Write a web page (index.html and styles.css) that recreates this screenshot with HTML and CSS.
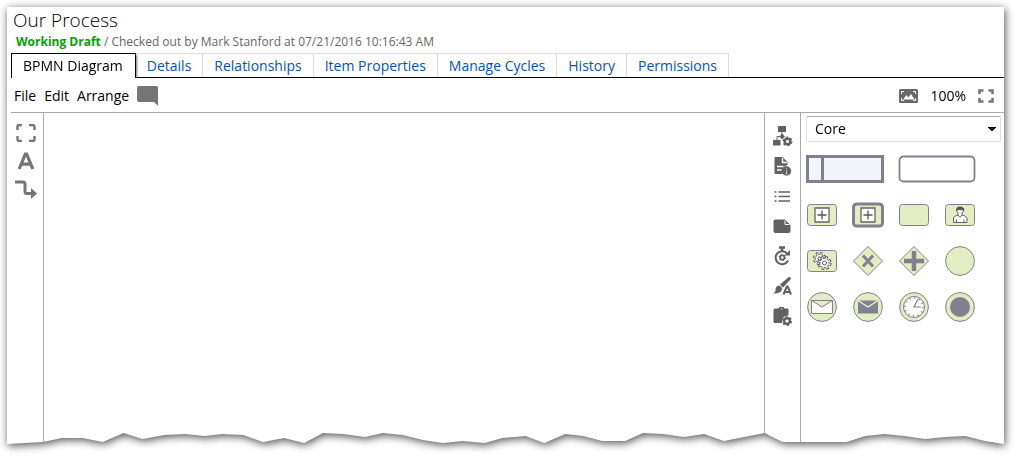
FILE: index.html
```html
<!DOCTYPE html>
<html lang="en">
<head>
<meta charset="utf-8">
<title>Our Process</title>
<link rel="stylesheet" href="styles.css">
</head>
<body>
<div class="shadow">
<div class="page">
  <header class="head">
    <h1 class="title">Our Process</h1>
    <p class="status"><strong class="state">Working Draft</strong> / Checked out by Mark Stanford at 07/21/2016 10:16:43 AM</p>
  </header>
  <nav class="tabs">
    <button class="tab active">BPMN Diagram</button>
    <button class="tab">Details</button>
    <button class="tab">Relationships</button>
    <button class="tab">Item Properties</button>
    <button class="tab">Manage Cycles</button>
    <button class="tab">History</button>
    <button class="tab">Permissions</button>
  </nav>
  <div class="toolbar">
    <button class="menu">File</button>
    <button class="menu">Edit</button>
    <button class="menu">Arrange</button>
    <button class="icon comment" aria-label="Comments"><svg width="22" height="20" viewBox="0 0 22 20"><path d="M2 0H19.500Q21 0 21 1.500V20L17 16H2Q0 16 0 14V2Q0 0 2 0Z" fill="#757575"/></svg></button>
    <span class="grow"></span>
    <button class="icon" aria-label="Overview"><svg width="19" height="14" viewBox="0 0 19 14"><rect width="19" height="14" rx="1.500" fill="#686868"/><path d="M2.500 5V2.500H5M14 2.500H16.500V5M16.500 9V11.500H14M5 11.500H2.500V9" fill="none" stroke="#fff"/><path d="M4 10.500L7.500 6L9.300 8.500L12 5L15.500 10.500Z" fill="#fff"/></svg></button>
    <span class="zoom">100%</span>
    <button class="icon" aria-label="Full screen"><svg width="16" height="14" viewBox="0 0 16 14"><path d="M1.500 5V1.500H5.500M10.500 1.500H14.500V5M14.500 9V12.500H10.500M5.500 12.500H1.500V9" fill="none" stroke="#757575" stroke-width="2.600"/></svg></button>
  </div>
  <main class="work">
    <div class="rail tools">
      <button class="icon" aria-label="Select"><svg width="20" height="18" viewBox="0 0 20 18"><path d="M1.500 6V2.500Q1.500 1 3 1H6M13 1H16.500Q18.500 1 18.500 3V6M18.500 12V15.500Q18.500 17 17 17H13M6 17H3Q1.500 17 1.500 15V12" fill="none" stroke="#757575" stroke-width="2.400"/></svg></button>
      <button class="icon" aria-label="Text"><svg width="18" height="18" viewBox="0 0 18 18"><path d="M2.200 17L8.300 2.200H9.700L15.800 17M4 12.200H14" fill="none" stroke="#757575" stroke-width="3.200"/></svg></button>
      <button class="icon" aria-label="Connector"><svg width="22" height="20" viewBox="0 0 22 20"><path d="M0 2H8Q10 2 10 4V11.500Q10 13.500 12 13.500H17" fill="none" stroke="#757575" stroke-width="3"/><path d="M16 8L22 13.500L16 19Z" fill="#757575"/></svg></button>
    </div>
    <section class="canvas" aria-label="Diagram canvas"></section>
    <div class="rail panels">
      <svg class="defs" width="0" height="0"><defs>
        <g id="gear"><circle r="2.800" fill="none" stroke="#616161" stroke-width="2.400"/><circle r="4.200" fill="none" stroke="#616161" stroke-width="1.600" stroke-dasharray="2.200"/></g>
      </defs></svg>
      <button class="icon" aria-label="Structure"><svg width="20" height="20" viewBox="0 0 20 20"><path d="M5 0H13V6H5ZM0 14H7.500V19.500H0Z" fill="#616161"/><path d="M9 6V10M4 14V10.500H9" fill="none" stroke="#616161"/><path d="M9 7.500L12 10.500L9 13.500L6.500 10.500Z" fill="#616161"/><use href="#gear" x="14.500" y="15.500"/></svg></button>
      <button class="icon" aria-label="Information"><svg width="20" height="20" viewBox="0 0 20 20"><path d="M2.500 1H9.500L14.500 6V9Q9 10 9.500 18H2.500Q1.500 18 1.500 17V2Q1.500 1 2.500 1Z" fill="#616161"/><path d="M9.500 2V6.500H14M4 10.500H10.500M4 14H8.500" fill="none" stroke="#fff" stroke-width="1.400"/><circle cx="13.500" cy="15" r="4.700" fill="#616161"/><path d="M13.500 12V13M13.500 14V18M12.500 18H14.500" stroke="#ddd" stroke-width=".8"/></svg></button>
      <button class="icon" aria-label="List"><svg width="20" height="20" viewBox="0 0 20 20"><path d="M1.500 6H3.500M5.500 6H17M1.500 10.500H3.500M5.500 10.500H17M1.500 15H3.500M5.500 15H17" stroke="#616161" stroke-width="1.700"/></svg></button>
      <button class="icon" aria-label="Note"><svg width="20" height="20" viewBox="0 0 20 20"><path d="M2.500 3.500H12L17.500 9V15Q17.500 17 15.500 17H2.500Q.5 17 .5 15V5.500Q.5 3.500 2.500 3.500Z" fill="#616161"/><path d="M12 4.500V8.500H16.500" fill="none" stroke="#fff"/></svg></button>
      <button class="icon" aria-label="Timing"><svg width="20" height="20" viewBox="0 0 20 20"><path d="M15 14.500A6.500 6.500 0 1 1 14.500 8" fill="none" stroke="#616161" stroke-width="2"/><path d="M6 1.500H12M9 2V5" stroke="#616161" stroke-width="2.400"/><path d="M17 4V9.500H11.500Z" fill="#616161"/><circle cx="9.300" cy="11.500" r="2.200" fill="none" stroke="#616161" stroke-width="1.700"/><circle cx="9.300" cy="11.500" r="3.300" fill="none" stroke="#616161" stroke-dasharray="1.700"/></svg></button>
      <button class="icon" aria-label="Formatting"><svg width="20" height="20" viewBox="0 0 20 20"><path d="M15.500 1.200Q18.500 .5 17.500 3.500L10 11.500L7 8.500Z" fill="#616161"/><path d="M6 9.500Q9.500 10.500 9 13.500Q7.500 18 0 17.500Q3 16 2.500 13Q3 10 6 9.500Z" fill="#616161"/><path d="M10.500 18.500L13.800 10.500H14.700L18 18.500M12 16H16.500" fill="none" stroke="#616161" stroke-width="2"/></svg></button>
      <button class="icon" aria-label="Task settings"><svg width="20" height="20" viewBox="0 0 20 20"><path d="M2 2.500H5.500L6.500 1H10.500L11.500 2.500H14.500Q15.500 2.500 15.500 4V9.500Q9 9 9 17H2Q.5 17 .5 15.500V4Q.5 2.500 2 2.500Z" fill="#616161"/><circle cx="8.500" cy="3" r=".8" fill="#ccc"/><use href="#gear" x="14" y="15"/></svg></button>
    </div>
    <aside class="palette">
      <select class="group" aria-label="Shape group"><option>Core</option></select>
      <div class="shapes">
        <button class="shape wide" aria-label="Pool"><svg width="78" height="30" viewBox="0 0 78 30"><rect x="1.500" y="2.500" width="75" height="25" fill="#f3f4f9" stroke="#82808f" stroke-width="3"/><path d="M16.500 2V28" stroke="#82808f" stroke-width="3"/></svg></button>
        <button class="shape wide" aria-label="Group"><svg width="78" height="30" viewBox="0 0 78 30"><rect x="1.500" y="2.500" width="75" height="25" rx="4" fill="#fff" stroke="#82808f" stroke-width="1.800"/></svg></button>
        <button class="shape" aria-label="Subprocess"><svg width="32" height="30" viewBox="0 0 32 30"><rect x="1.500" y="4.500" width="29" height="21" rx="3" fill="#e3edc3" stroke="#82808f"/><path d="M9 8H23V22H9Z" fill="#fff" stroke="#666" stroke-width="1.300"/><path d="M11.500 15H20.500M16 10.500V19.500" stroke="#555" stroke-width="1.300"/></svg></button>
        <button class="shape" aria-label="Call activity"><svg width="32" height="30" viewBox="0 0 32 30"><rect x="1.500" y="4" width="29" height="22" rx="3" fill="#e3edc3" stroke="#82808f" stroke-width="3"/><path d="M9 8H23V22H9Z" fill="#fff" stroke="#666" stroke-width="1.300"/><path d="M11.500 15H20.500M16 10.500V19.500" stroke="#555" stroke-width="1.300"/></svg></button>
        <button class="shape" aria-label="Task"><svg width="32" height="30" viewBox="0 0 32 30"><rect x="1.500" y="4.500" width="29" height="21" rx="3" fill="#e3edc3" stroke="#82808f"/></svg></button>
        <button class="shape" aria-label="User task"><svg width="32" height="30" viewBox="0 0 32 30"><rect x="1.500" y="4.500" width="29" height="21" rx="3" fill="#e3edc3" stroke="#82808f"/><path d="M9.500 22.500V18Q10 16 14 15V13Q12 11 12.500 9Q16 6 20 9Q20 12 18 13V15Q22.500 16 23 18V22.500Z" fill="#fff" stroke="#666"/><path d="M12 10.500Q12 6.500 16 6.500Q20.500 6.500 20 11Q18 9.500 12 10.500Z" fill="#555"/><path d="M14 15L16 17.500L18 15M12.500 19.500V22M20 19.500V22" fill="none" stroke="#666"/></svg></button>
        <button class="shape" aria-label="Service task"><svg width="32" height="30" viewBox="0 0 32 30"><rect x="1.500" y="4.500" width="29" height="21" rx="3" fill="#e3edc3" stroke="#82808f"/>
          <g fill="none"><circle cx="13.500" cy="12.500" r="5" stroke="#555" stroke-width="3.200" stroke-dasharray="2.200 1.727"/><circle cx="13.500" cy="12.500" r="4.200" fill="#fff" stroke="#555"/><circle cx="13.500" cy="12.500" r="4.700" stroke="#fff" stroke-width="1.800" stroke-dasharray="1.200 2.491" stroke-dashoffset="-.5"/><circle cx="13.500" cy="12.500" r="1.600" stroke="#555"/>
          <circle cx="18.500" cy="17" r="5.500" stroke="#555" stroke-width="3.200" stroke-dasharray="2.500 1.820"/><circle cx="18.500" cy="17" r="4.700" fill="#fff" stroke="#555"/><circle cx="18.500" cy="17" r="5.200" stroke="#fff" stroke-width="1.800" stroke-dasharray="1.400 2.684" stroke-dashoffset="-.5"/><circle cx="18.500" cy="17" r="2" stroke="#555"/></g></svg></button>
        <button class="shape" aria-label="Exclusive gateway"><svg width="32" height="30" viewBox="0 0 32 30"><path d="M16 .5L30.500 15L16 29.500L1.500 15Z" fill="#e3edc3" stroke="#82808f"/><path d="M11 9.500L21 20.500M21 9.500L11 20.500" stroke="#82808f" stroke-width="3"/></svg></button>
        <button class="shape" aria-label="Parallel gateway"><svg width="32" height="30" viewBox="0 0 32 30"><path d="M16 .5L30.500 15L16 29.500L1.500 15Z" fill="#e3edc3" stroke="#82808f"/><path d="M6 15H26M16 5V25" stroke="#82808f" stroke-width="4.500"/></svg></button>
        <button class="shape" aria-label="Start event"><svg width="32" height="30" viewBox="0 0 32 30"><circle cx="16" cy="15" r="14.400" fill="#e3edc3" stroke="#82808f"/></svg></button>
        <button class="shape" aria-label="Message start event"><svg width="32" height="30" viewBox="0 0 32 30"><circle cx="16" cy="15" r="14.400" fill="#e3edc3" stroke="#82808f"/><path d="M5.500 8.500H26.500V21.500H5.500ZM5.500 8.500L16 15L26.500 8.500" fill="#fff" stroke="#82808f"/></svg></button>
        <button class="shape" aria-label="Message end event"><svg width="32" height="30" viewBox="0 0 32 30"><circle cx="16" cy="15" r="14.400" fill="#e3edc3" stroke="#82808f"/><path d="M6 8.500H26V21.500H6Z" fill="#82808f"/><path d="M6 8.500L16 15L26 8.500" fill="none" stroke="#f1f5df" stroke-width="1.300"/></svg></button>
        <button class="shape" aria-label="Timer event"><svg width="32" height="30" viewBox="0 0 32 30"><circle cx="16" cy="15" r="14.400" fill="#e3edc3" stroke="#82808f"/><circle cx="16" cy="15" r="10.500" fill="#fff" stroke="#82808f"/><circle cx="16" cy="15" r="9" fill="none" stroke="#82808f" stroke-width="2" stroke-dasharray="1 3.712"/><path d="M20 7L16 15H23" fill="none" stroke="#82808f" stroke-width="1.200"/></svg></button>
        <button class="shape" aria-label="Terminate event"><svg width="32" height="30" viewBox="0 0 32 30"><circle cx="16" cy="15" r="14.400" fill="#e3edc3" stroke="#82808f"/><circle cx="16" cy="15" r="10" fill="#82808f"/></svg></button>
      </div>
    </aside>
  </main>
</div>
</div>
</body>
</html>
```
FILE: styles.css
```css
* { box-sizing: border-box; }

body {
  margin: 0;
  min-height: 100vh;
  padding: 7px 11px 11px 7px;
  display: flex;
  background: #fff;
  color: #000;
  font: 14px/20px "Open Sans", "Noto Sans", sans-serif;
}

button, select {
  margin: 0;
  padding: 0;
  border: 0;
  background: none;
  color: inherit;
  font: inherit;
}

svg { display: block; }

.shadow {
  flex: 1;
  display: flex;
  min-width: 0;
  filter: drop-shadow(1px 2px 4px rgba(0, 0, 0, 0.7));
}

/* Sheet of paper with a torn lower edge */
.page {
  flex: 1;
  min-width: 0;
  display: flex;
  flex-direction: column;
  padding-left: 4px;
  background: #fff;
  clip-path: polygon(0 0, 100% 0, 100% 100%,
    98.1% calc(100% - 3px), 96.1% calc(100% - 8px), 94.1% calc(100% - 7px),
    92.1% calc(100% - 5px), 90% calc(100% - 8px), 88% calc(100% - 10px),
    86.1% calc(100% - 8px), 84.2% calc(100% - 2px), 77.8% calc(100% - 2px),
    76% calc(100% - 11px), 71.9% calc(100% - 3px), 69.9% calc(100% - 10px),
    67.9% calc(100% - 7px), 65.8% calc(100% - 10px), 63.8% calc(100% - 11px),
    62% calc(100% - 3px), 59.7% calc(100% - 3px), 57.8% calc(100% - 8px),
    56% calc(100% - 10px), 53.9% calc(100% - 1px), 52% calc(100% - 8px),
    49.7% calc(100% - 6px), 47.9% calc(100% - 1px), 45.7% calc(100% - 3px),
    43.7% calc(100% - 1px), 41.7% calc(100% - 4px), 39.7% calc(100% - 9px),
    37.7% calc(100% - 11px), 35.9% calc(100% - 7px), 33.7% calc(100% - 10px),
    31.7% calc(100% - 11px), 29.8% calc(100% - 1px), 27.8% calc(100% - 6px),
    25.7% calc(100% - 2px), 23.7% calc(100% - 9px), 21.6% calc(100% - 10px),
    19.8% calc(100% - 8px), 17.9% calc(100% - 10px), 15.8% calc(100% - 9px),
    13.6% calc(100% - 5px), 11.7% calc(100% - 11px), 9.6% calc(100% - 2px),
    7.6% calc(100% - 6px), 5.5% calc(100% - 6px), 3.6% calc(100% - 2px),
    0 100%);
}

.head { padding: 1px 2px 2px; }

.title {
  margin: 0;
  font-size: 19px;
  font-weight: 300;
  line-height: 25px;
}

.status {
  margin: 0;
  padding-left: 3px;
  color: #666;
  font-size: 12px;
  line-height: 18px;
}

.state { color: #00a100; font-weight: 700; }

.tabs {
  display: flex;
  border-bottom: 1px solid #000;
}

.tab {
  height: 24px;
  padding: 0 11px;
  border: solid #ddd;
  border-width: 1px 1px 0 0;
  color: #0b50b0;
}

.tab.active {
  position: relative;
  height: 25px;
  margin-bottom: -1px;
  padding-right: 12px;
  border-color: #000;
  border-width: 1px 1px 0;
  background: #fff;
  color: #000;
  box-shadow: 2px 1px 2px -1px #777;
  clip-path: inset(0 -4px 0 0);
}

.toolbar {
  height: 35px;
  display: flex;
  align-items: center;
  gap: 8px;
  padding: 2px 10px 0 3px;
  border-bottom: 1px solid #a9a9a9;
}

.icon {
  display: flex;
  align-items: center;
  justify-content: center;
}

.grow { flex: 1; }
.zoom { padding: 0 4px; }

.work {
  flex: 1;
  display: flex;
}

.rail {
  display: flex;
  flex-direction: column;
  align-items: center;
}

.tools {
  width: 33px;
  padding: 11px 2px 0 0;
  gap: 10px;
  border-right: 1px solid #a9a9a9;
}

.canvas { flex: 1; }

.panels {
  width: 37px;
  padding-top: 13px;
  gap: 10px;
  border: solid #a9a9a9;
  border-width: 0 1px;
}

.defs { position: absolute; }

.palette {
  width: 203px;
  padding: 3px 3px 16px 5px;
}

.group {
  display: block;
  width: 100%;
  height: 26px;
  padding: 0 8px;
  appearance: none;
  border: 1px solid #dcdce6;
  border-top-color: #a9a9b4;
  border-radius: 2px;
  background: conic-gradient(from 315deg at 50% 100%, #000 90deg, transparent 0) no-repeat right 4px center / 8px 4px #fff;
}

.shapes {
  display: grid;
  grid-template-columns: repeat(4, 32px);
  gap: 16px 14px;
  padding-top: 12px;
}

.wide { grid-column: span 2; }
```
